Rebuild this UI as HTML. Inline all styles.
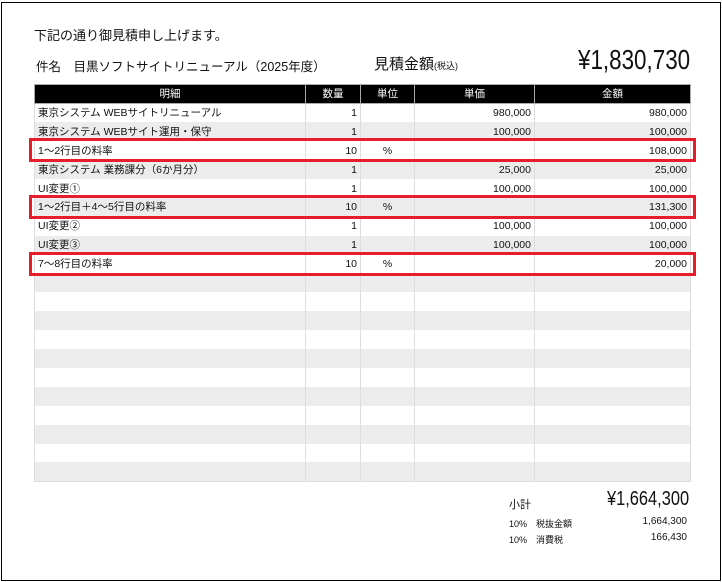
<!DOCTYPE html>
<html><head><meta charset="utf-8"><style>
*{margin:0;padding:0;box-sizing:border-box}
body{width:722px;height:582px;background:#fff;position:relative;overflow:hidden;font-family:"Liberation Sans","Noto Sans CJK JP",sans-serif;color:#111}
.frame{position:absolute;left:1px;top:2px;width:720px;height:579px;border:1px solid #000}
.t{position:absolute;white-space:nowrap}
.n{font-family:"Liberation Sans Narrow","Liberation Sans","Noto Sans CJK JP",sans-serif}
table{position:absolute;left:34px;top:84px;border-collapse:collapse;table-layout:fixed;width:656px}
td,th{font-size:10.5px;height:18.9px;padding:0 3px;border-left:1px solid #ddd;border-right:1px solid #ddd;white-space:nowrap;overflow:hidden;line-height:18px}
th{background:#000;color:#fff;font-weight:normal;height:19px;border:1px solid #aaa;text-align:center}
tr:nth-child(odd) td{background:#ececec}
tr:last-child td{border-bottom:1px solid #ddd}
.r{text-align:right}.c{text-align:center}
.box{position:absolute;left:29px;width:667px;height:24px;border:3px solid #e81c2a}
</style></head><body>
<div class="frame"></div>
<div class="t" style="left:34px;top:25px;font-size:13px">下記の通り御見積申し上げます。</div>
<div class="t" style="left:36px;top:56px;font-size:12.5px">件名　目黒ソフトサイトリニューアル（2025年度）</div>
<div class="t" style="left:374px;top:53px;font-size:15px">見積金額<span style="font-size:9px">(税込)</span></div>
<div class="t n" style="left:578px;top:44px;font-size:28px;transform:scaleX(.8);transform-origin:left">¥1,830,730</div>
<table>
<colgroup><col style="width:271px"><col style="width:55px"><col style="width:54px"><col style="width:120px"><col style="width:156px"></colgroup>
<tbody>
<tr><th>明細</th><th>数量</th><th>単位</th><th>単価</th><th>金額</th></tr>
<tr><td>東京システム WEBサイトリニューアル</td><td class="r">1</td><td></td><td class="r">980,000</td><td class="r">980,000</td></tr>
<tr><td>東京システム WEBサイト運用・保守</td><td class="r">1</td><td></td><td class="r">100,000</td><td class="r">100,000</td></tr>
<tr><td>1～2行目の料率</td><td class="r">10</td><td class="c">%</td><td></td><td class="r">108,000</td></tr>
<tr><td>東京システム 業務課分（6か月分）</td><td class="r">1</td><td></td><td class="r">25,000</td><td class="r">25,000</td></tr>
<tr><td>UI変更①</td><td class="r">1</td><td></td><td class="r">100,000</td><td class="r">100,000</td></tr>
<tr><td>1～2行目＋4～5行目の料率</td><td class="r">10</td><td class="c">%</td><td></td><td class="r">131,300</td></tr>
<tr><td>UI変更②</td><td class="r">1</td><td></td><td class="r">100,000</td><td class="r">100,000</td></tr>
<tr><td>UI変更③</td><td class="r">1</td><td></td><td class="r">100,000</td><td class="r">100,000</td></tr>
<tr><td>7～8行目の料率</td><td class="r">10</td><td class="c">%</td><td></td><td class="r">20,000</td></tr>
<tr><td></td><td></td><td></td><td></td><td></td></tr>
<tr><td></td><td></td><td></td><td></td><td></td></tr>
<tr><td></td><td></td><td></td><td></td><td></td></tr>
<tr><td></td><td></td><td></td><td></td><td></td></tr>
<tr><td></td><td></td><td></td><td></td><td></td></tr>
<tr><td></td><td></td><td></td><td></td><td></td></tr>
<tr><td></td><td></td><td></td><td></td><td></td></tr>
<tr><td></td><td></td><td></td><td></td><td></td></tr>
<tr><td></td><td></td><td></td><td></td><td></td></tr>
<tr><td></td><td></td><td></td><td></td><td></td></tr>
<tr><td></td><td></td><td></td><td></td><td></td></tr>
</tbody></table>
<div class="box" style="top:138px"></div>
<div class="box" style="top:195px"></div>
<div class="box" style="top:252px"></div>
<div class="t" style="left:509px;top:496px;font-size:11px">小計</div>
<div class="t n" style="left:607px;top:488px;font-size:20px;transform:scaleX(.82);transform-origin:left">¥1,664,300</div>
<div class="t" style="left:509px;top:517px;font-size:9px">10%　税抜金額</div>
<div class="t n" style="right:35px;top:516px;font-size:10px">1,664,300</div>
<div class="t" style="left:509px;top:533px;font-size:9px">10%　消費税</div>
<div class="t n" style="right:35px;top:532px;font-size:10px">166,430</div>
</body></html>
